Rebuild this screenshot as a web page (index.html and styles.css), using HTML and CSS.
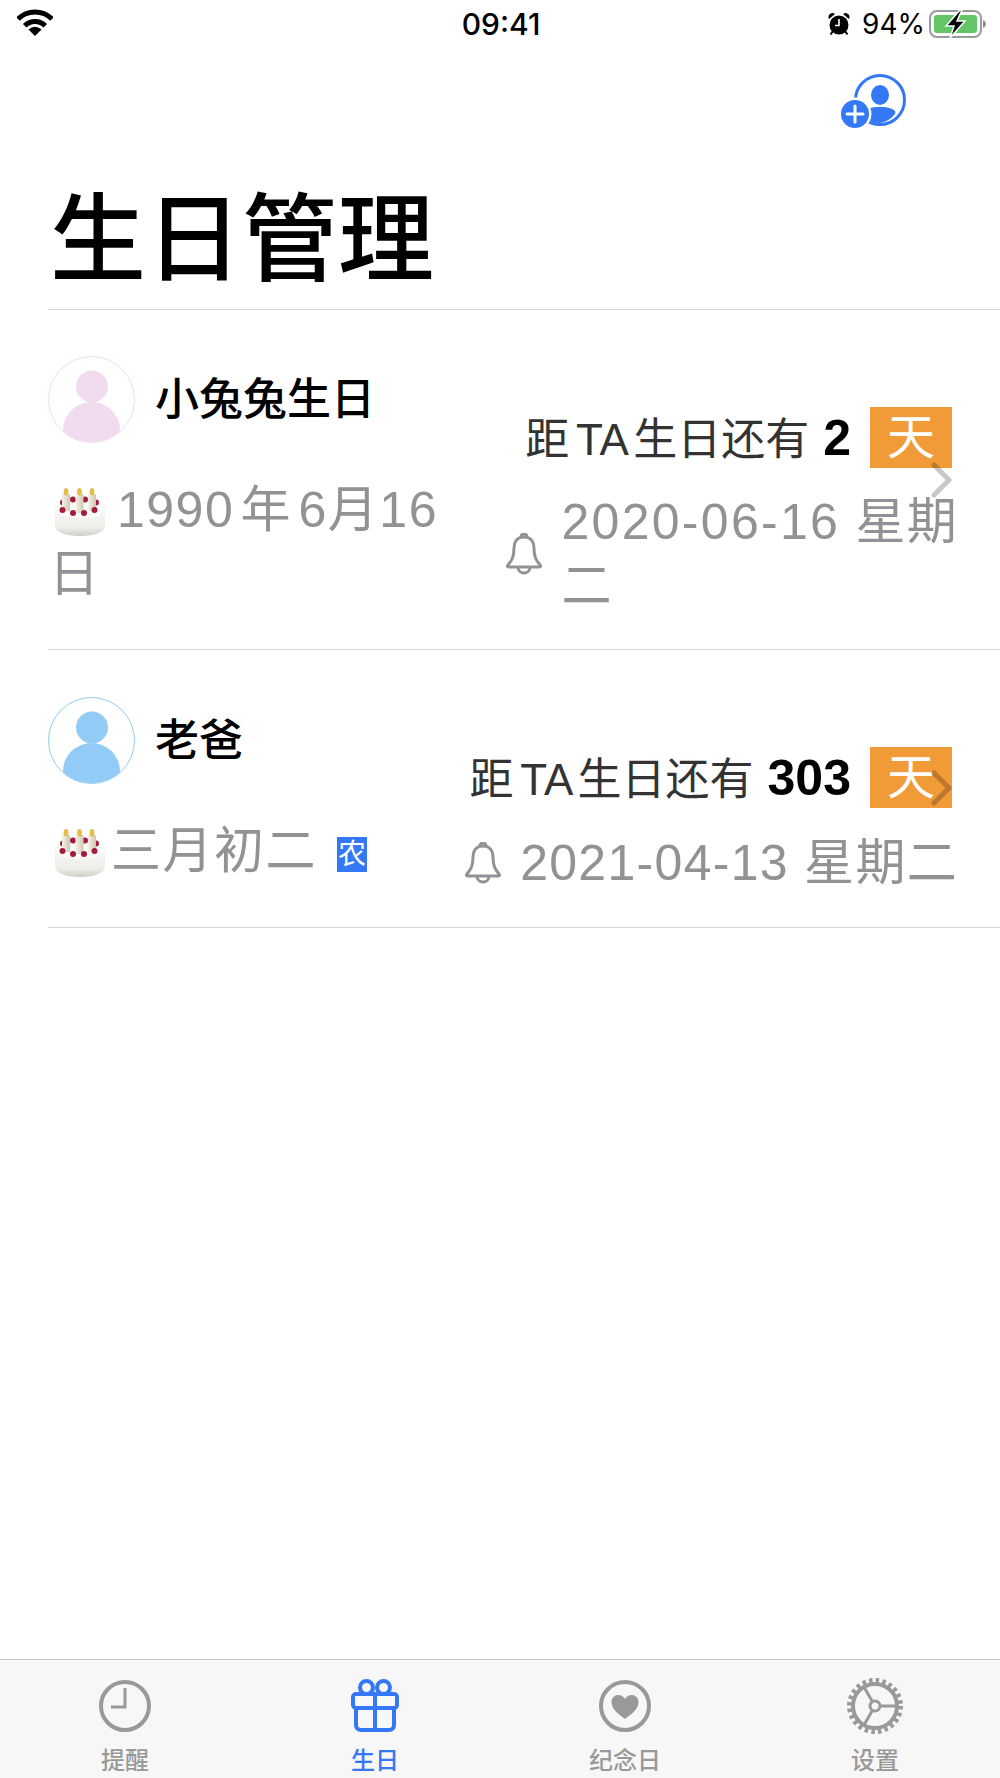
FILE: index.html
```html
<!DOCTYPE html>
<html lang="zh-CN">
<head>
    <title>生日管理</title>
    <link rel="stylesheet" href="styles.css">
</head>
<body>

<svg class="defs" aria-hidden="true">
    <defs>
        <linearGradient id="cakeSide" x1="0" y1="0" x2="0" y2="1">
            <stop offset="0" stop-color="#f7f7f4"/>
            <stop offset=".7" stop-color="#eeeee9"/>
            <stop offset="1" stop-color="#cfcec6"/>
        </linearGradient>
        <linearGradient id="candleFill" x1="0" y1="0" x2="1" y2="0">
            <stop offset="0" stop-color="#f6f3e6"/>
            <stop offset="1" stop-color="#cdc8b4"/>
        </linearGradient>
        <clipPath id="avatarClip"><circle cx="43.5" cy="43.5" r="42.5"/></clipPath>
    </defs>
    <symbol id="cake" viewBox="0 0 50 50">
        <path d="M0 20v18c0 6 11 10 25 10s25-4 25-10V20z" fill="url(#cakeSide)"/>
        <ellipse cx="25" cy="20" rx="25" ry="10.5" fill="#fafaf8"/>
        <g fill="#a31c3d">
            <circle cx="8" cy="14.5" r="3"/><circle cx="18" cy="11.5" r="3"/>
            <circle cx="30" cy="11.5" r="3"/><circle cx="41" cy="14.5" r="3"/>
        </g>
        <g fill="url(#candleFill)">
            <rect x="7" y="6" width="8" height="17" rx="1"/>
            <rect x="20.500" y="6" width="8" height="19" rx="1"/>
            <rect x="33" y="6" width="8" height="17" rx="1"/>
        </g>
        <g fill="#e3bd45">
            <ellipse cx="11" cy="3.800" rx="2.400" ry="3.800"/>
            <ellipse cx="24.500" cy="3.800" rx="2.400" ry="3.800"/>
            <ellipse cx="37" cy="3.800" rx="2.400" ry="3.800"/>
        </g>
        <g fill="#a31c3d">
            <circle cx="7.500" cy="22" r="3"/><circle cx="18" cy="25" r="3"/>
            <circle cx="29" cy="25" r="3"/><circle cx="39.500" cy="22" r="3"/>
        </g>
    </symbol>
    <symbol id="bell" viewBox="0 0 38 42">
        <path d="M19 4c-7 0-10 5-10 11 0 9-2 12-6 17-1 1-1 2 1 2h30c2 0 2-1 1-2-4-5-6-8-6-17 0-6-3-11-10-11z" fill="none" stroke="#929296" stroke-width="3" stroke-linejoin="round"/>
        <path d="M16 4c0-4 6-4 6 0M13 34c0 8 12 8 12 0" fill="none" stroke="#929296" stroke-width="3"/>
    </symbol>
    <symbol id="avatar" viewBox="0 0 87 87">
        <circle cx="43.500" cy="43.500" r="43" fill="#fff" stroke="currentColor" stroke-width="1"/>
        <g clip-path="url(#avatarClip)" fill="currentColor">
            <circle cx="44" cy="30.500" r="16"/>
            <ellipse cx="43.500" cy="74" rx="28.500" ry="28"/>
            <rect x="15" y="74" width="57" height="13"/>
        </g>
    </symbol>
    <symbol id="chevron" viewBox="0 0 22 36">
        <path d="M3 3l15 15L3 33" fill="none" stroke="#000" stroke-opacity=".22" stroke-width="5" stroke-linecap="round" stroke-linejoin="round"/>
    </symbol>
</svg>

<div class="status-bar">
    <svg class="wifi" width="36" height="28" viewBox="0 0 36 28">
        <path d="M1 10a24 24 0 0 1 34 0M7.700 16.700a14.500 14.500 0 0 1 20.600 0" fill="none" stroke="#000" stroke-width="5"/>
        <path d="M18 27l-6.500-6.500q6.500-5.500 13 0z"/>
    </svg>
    <div class="status-time">09:41</div>
    <div class="status-right">
        <svg width="22" height="24" viewBox="0 0 22 24">
            <circle cx="11" cy="13" r="9.500"/>
            <path d="M1 7a4 4 0 0 1 6-5zM21 7a4 4 0 0 0-6-5z"/>
            <path d="M5 19l-2.500 3.500M17 19l2.500 3.500" stroke="#000" stroke-width="2"/>
            <path d="M11 7v6.500H7" fill="none" stroke="#fff" stroke-width="1.600"/>
        </svg>
        <span class="battery-pct">94%</span>
        <svg width="58" height="28" viewBox="0 0 58 28">
            <rect x="1" y="1" width="51" height="26" rx="7" fill="none" stroke="#9b9b9b" stroke-width="2"/>
            <rect x="5" y="5" width="43" height="18" rx="3" fill="#63c566"/>
            <path d="M54 10c2 1 3 2.500 3 4s-1 3-3 4z" fill="#8e8e8e"/>
            <path d="M31 0L17 16h8l-4 12 15-17h-8l5-11z" fill="#000" stroke="#fff" stroke-width="1.500"/>
        </svg>
    </div>
</div>

<div class="nav">
    <svg width="68" height="56" viewBox="0 0 68 56" fill="#3478f6">
        <circle cx="40" cy="27" r="24.500" fill="none" stroke="#3478f6" stroke-width="3"/>
        <ellipse cx="40" cy="22" rx="9" ry="10"/>
        <path d="M28 36c7-3 17-3 24 0 3 1 4 3 3 5-4 5-9 8-15 9-5 0-9-1-12-3z"/>
        <circle cx="15" cy="41" r="16.500" fill="#fff"/>
        <circle cx="15" cy="41" r="14"/>
        <path d="M15 33v16M7 41h16" stroke="#fff" stroke-width="3" stroke-linecap="round"/>
    </svg>
</div>

<h1 class="title">生日管理</h1>

<div class="list">
    <div class="row">
        <div class="row-left">
            <div class="person">
                <svg class="avatar pink"><use href="#avatar"/></svg>
                <span class="name">小兔兔生日</span>
            </div>
            <div class="birth">
                <svg class="cake"><use href="#cake"/></svg>1990 年 6月16<br>日
            </div>
        </div>
        <div class="row-right">
            <div class="countdown">
                <span class="countdown-text">距 TA 生日还有</span>
                <b class="days">2</b>
                <span class="unit">天</span>
            </div>
            <div class="next-date">
                <svg class="bell"><use href="#bell"/></svg>
                <span class="next-text"><span class="num-wide">2020-06-16</span> 星期<br>二</span>
            </div>
        </div>
        <svg class="chevron chevron-low"><use href="#chevron"/></svg>
    </div>

    <div class="row">
        <div class="row-left">
            <div class="person">
                <svg class="avatar blue"><use href="#avatar"/></svg>
                <span class="name">老爸</span>
            </div>
            <div class="birth">
                <svg class="cake cake-lunar"><use href="#cake"/></svg>三月初二<span class="lunar-tag">农</span>
            </div>
        </div>
        <div class="row-right">
            <div class="countdown">
                <span class="countdown-text">距 TA 生日还有</span>
                <b class="days">303</b>
                <span class="unit">天</span>
            </div>
            <div class="next-date">
                <svg class="bell"><use href="#bell"/></svg>
                <span class="next-text">2021-04-13 星期二</span>
            </div>
        </div>
        <svg class="chevron chevron-high"><use href="#chevron"/></svg>
    </div>
</div>

<div class="tab-bar">
    <div class="tab">
        <svg width="60" height="60" viewBox="0 0 60 60">
            <circle cx="30" cy="30" r="24" fill="none" stroke="#999" stroke-width="4"/>
            <path d="M30 12v19H16" fill="none" stroke="#999" stroke-width="3"/>
        </svg>
        <span>提醒</span>
    </div>
    <div class="tab active">
        <svg width="60" height="60" viewBox="0 0 60 60" fill="none" stroke="#3478f6" stroke-width="4" stroke-linejoin="round">
            <circle cx="21.500" cy="11.500" r="6.500"/>
            <circle cx="38.500" cy="11.500" r="6.500"/>
            <rect x="8" y="18" width="44" height="14" rx="3" fill="#f7f7f7"/>
            <path d="M11 32v17c0 3 2 5 5 5h28c3 0 5-2 5-5V32M30 18v36"/>
        </svg>
        <span>生日</span>
    </div>
    <div class="tab">
        <svg width="60" height="60" viewBox="0 0 60 60">
            <circle cx="30" cy="30" r="24" fill="none" stroke="#999" stroke-width="4"/>
            <path d="M30 43C22 37 16.500 32.500 16.500 26c0-4 3-7 6.500-7 3 0 5.500 1.500 7 4 1.500-2.500 4-4 7-4 3.500 0 6.500 3 6.500 7 0 6.500-5.500 11-13.500 17z" fill="#999"/>
        </svg>
        <span>纪念日</span>
    </div>
    <div class="tab">
        <svg width="60" height="60" viewBox="0 0 60 60" fill="none" stroke="#999">
            <circle cx="30" cy="30" r="25.500" stroke-width="5" stroke-dasharray="3.500 3.170"/>
            <circle cx="30" cy="30" r="22" stroke-width="4"/>
            <circle cx="30" cy="30" r="5" stroke-width="3"/>
            <path d="M35 30h17M27.500 34.300L19 49M27.500 25.700L19 11" stroke-width="3"/>
        </svg>
        <span>设置</span>
    </div>
</div>

</body>
</html>
```

FILE: styles.css
```css
* { box-sizing: border-box; }

body {
    margin: 0; height: 1778px; display: flex; flex-direction: column; overflow: hidden; background-color: #fff; color: #000;
    font-family: "Liberation Sans", "Noto Sans CJK SC", sans-serif;
}

.defs { position: absolute; width: 0; height: 0; }

.status-bar { display: grid; grid-template-columns: 1fr auto 1fr; align-items: center; height: 50px; padding: 0 13px 2px 17px;
}

.wifi { margin-top: -3px; }

.status-time { margin-left: -2px; font-family: "Inter", sans-serif; font-size: 30px; font-weight: 500;
}

.status-right { display: flex; justify-content: flex-end; align-items: center; gap: 12px; font-family: "Inter", sans-serif; font-size: 28px;
}

.status-right svg + span + svg { margin-left: -8px; }

.nav { display: flex; justify-content: flex-end; height: 56px; margin-top: 23px; padding-right: 92px;
}

.title { margin: 63px 0 0 50px; height: 117px; font-size: 96px; line-height: 96px; font-weight: 500;
}

.list { flex: 1; margin-left: 48px; border-top: 1px solid #d4d4d6;
}

.row { position: relative; display: flex; justify-content: space-between; padding: 46px 48px 31px 0; border-bottom: 1px solid #d4d4d6;
}

.row + .row { padding: 47px 48px 32px 0; }

.person { display: flex; align-items: center; gap: 20px; }

.avatar { width: 87px; height: 87px; }
.pink { color: #f1dbef; }
.blue { color: #92cbf5; }

.name { font-size: 44px; font-weight: 500; line-height: 64px;
}

.birth { margin: 35px 0 0 1px; color: #929296; font-size: 50px; line-height: 64px; letter-spacing: 1.5px; word-spacing: -9px;
}

.cake { width: 50px; height: 50px; margin: 0 12px 0 6px; vertical-align: -11px; }
.cake-lunar { margin-right: 6px; }

.lunar-tag { display: inline-block; width: 30px; height: 35px; margin-left: 20px; background-color: #3478f6; color: #fff; font-size: 28px; line-height: 35px; letter-spacing: 0; text-align: center; vertical-align: 4px;
}

.row-right { display: flex; flex-direction: column; align-items: flex-end; padding-top: 51px;
}

.row + .row .row-right { padding-top: 50px; }
.row + .row .next-date { margin-top: 23px; }

.countdown { display: flex; align-items: center; height: 61px; color: #333;
}

.countdown-text { font-size: 44px; word-spacing: -5.5px; margin-top: -4px; }

.days { margin: 0 19px 0 14px; color: #000; font-size: 50px; }

.unit { width: 82px; height: 61px; background-color: #f19a38; color: #fff; font-size: 48px; line-height: 61px; text-align: center;
}

.next-date { display: flex; align-items: center; margin: 22px -6px 0 0; color: #929296;
}

.bell { flex: none; width: 38px; height: 42px; margin-right: 18px; }

.next-text { font-size: 50px; line-height: 64px; letter-spacing: 1.3px;
}

.num-wide { letter-spacing: 2.3px; }

.chevron { position: absolute; right: 47px; width: 22px; height: 36px; }
.chevron-low { top: 152px; }
.chevron-high { top: 120px; }

.tab-bar { display: grid; grid-template-columns: repeat(4, 1fr); height: 119px; padding-top: 16px; background-color: #f7f7f7; border-top: 1px solid #c6c6c8;
}

.tab { display: flex; flex-direction: column; align-items: center; color: #999; font-size: 24px; line-height: 30px; font-weight: 500;
}

.tab span { margin-top: 10px; }
.active { color: #3478f6; }
```
